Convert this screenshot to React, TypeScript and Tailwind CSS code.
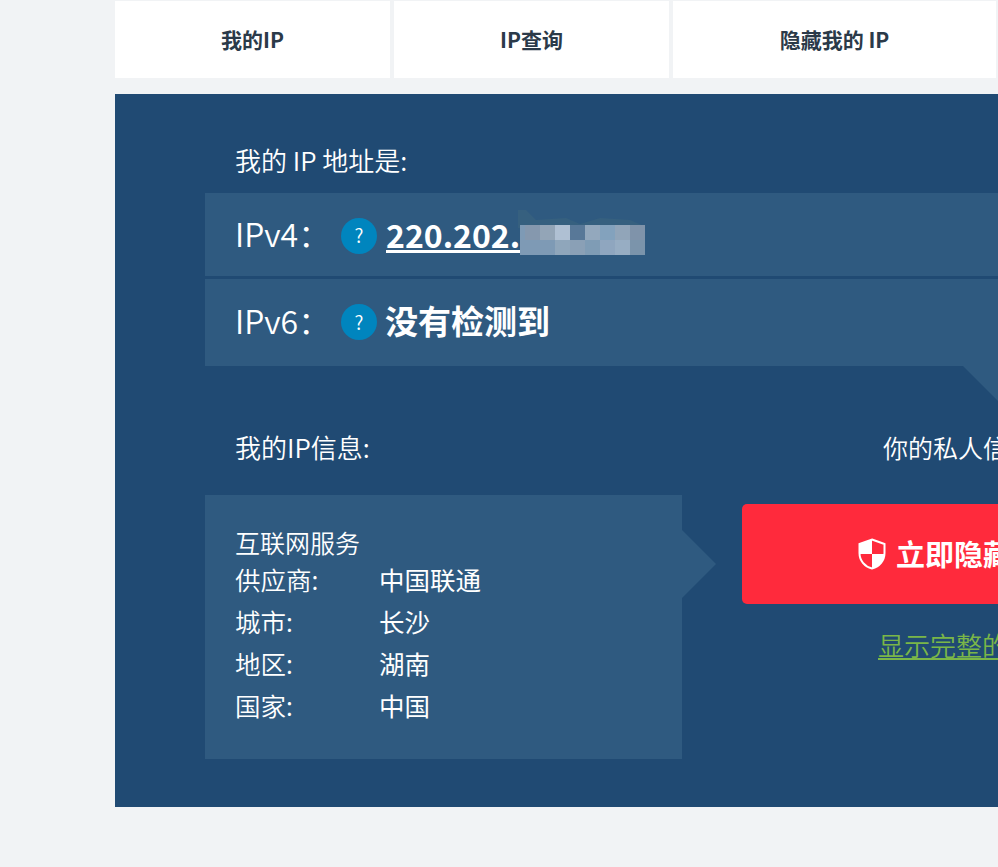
const tabs = [
  { label: '我的IP', width: 'w-[275px]' },
  { label: 'IP查询', width: 'w-[275px]' },
  { label: '隐藏我的 IP', width: 'w-[323px]' },
];

const infoRows = [
  { label: '城市:', value: '长沙' },
  { label: '地区:', value: '湖南' },
  { label: '国家:', value: '中国' },
];

const mosaicTop = ['#8598ae', '#93a5b7', '#afc0d3', '#587898', '#93a8bd', '#83a2bd', '#91a5b9', '#7f93aa'];
const mosaicBottom = ['#7e9ab5', '#7e9ab5', '#8fa6bb', '#8aa0b6', '#7f9cb5', '#8fa6bf', '#97adc3', '#7b94ab'];

function HelpDot({ className }: { className: string }) {
  return (
    <span className={`flex size-9 shrink-0 items-center justify-center rounded-full bg-[#0085be] text-[19px] font-[350] text-white ${className}`}>
      ?
    </span>
  );
}

function Mosaic() {
  return (
    <svg className="absolute left-[313px] top-[17px]" width="128" height="46" viewBox="0 0 128 46">
      <path d="M0 0h8l10 10 30-2 14 6 20-6 30 2 14 6v2H0z" fill="#36607f" />
      {mosaicTop.map((color, i) => (
        <rect key={i} x={i * 15 + 7} y="15" width="15" height="15" fill={color} />
      ))}
      {mosaicBottom.map((color, i) => (
        <rect key={i} x={i * 15 + 7} y="30" width="15" height="15" fill={color} />
      ))}
      <rect x="2" y="15" width="5" height="30" fill="#7e9ab5" />
    </svg>
  );
}

function ShieldIcon() {
  return (
    <svg width="28" height="32" viewBox="0 0 28 32" className="shrink-0">
      <path d="M14 1.500 26.500 6v9c0 7.500-5 13.500-12.500 15.500C6.500 28.500 1.500 22.500 1.500 15V6z" fill="none" stroke="#fff" strokeWidth="2" />
      <path d="M14 1.500 1.500 6v10H14z" fill="#fff" />
      <path d="M14 16h12.500c-.5 7-5.500 12.800-12.500 14.500z" fill="#fff" />
    </svg>
  );
}

export default function App() {
  return (
    <div
      className="h-[867px] w-[998px] overflow-hidden bg-[#f1f3f5] pl-[115px] pt-[1px]"
      style={{ fontFamily: '"Noto Sans CJK SC", "Noto Sans", sans-serif' }}
    >
      <nav className="flex w-[1000px] gap-1">
        {tabs.map((tab) => (
          <a
            key={tab.label}
            className={`flex h-[77px] shrink-0 items-center justify-center bg-white text-[21px] font-semibold text-[#2b3a49] ${tab.width}`}
          >
            {tab.label}
          </a>
        ))}
      </nav>

      <main className="mt-4 h-[713px] w-[1000px] bg-[#204a73] pl-[90px] pt-[48px] text-white">
        <h2 className="h-[51px] pl-[30px] text-[26px] font-[350] leading-[36px]">我的 IP 地址是:</h2>

        <div className="relative flex h-[83px] items-center bg-[#2f5a80] pl-[30px]">
          <span className="mb-[4px] w-[106px] text-[32px] font-[350]">IPv4：</span>
          <HelpDot className="mt-[2px]" />
          <a className="mb-[2px] ml-[9px] text-[32px] font-bold underline">220.202.</a>
          <Mosaic />
        </div>
        <div className="relative mt-[3px] flex h-[87px] items-center bg-[#2f5a80] pl-[30px]">
          <span className="mb-[5px] w-[106px] text-[32px] font-[350]">IPv6：</span>
          <HelpDot className="mb-[1px]" />
          <span className="mb-[4px] ml-[8px] text-[33px] font-bold">没有检测到</span>
          <span className="absolute left-[758px] top-full size-0 border-l-[36px] border-t-[36px] border-l-transparent border-t-[#2f5a80]" />
        </div>

        <div className="mt-[60px] flex">
          <section className="w-[477px] shrink-0">
            <h2 className="h-[69px] pl-[30px] text-[26px] font-[350] leading-[42px]">我的IP信息:</h2>
            <div className="relative h-[264px] bg-[#2f5a80] pl-[30px] pt-[32px] text-[25.500px]">
              <span className="absolute left-full top-[35px] size-0 border-y-[34px] border-l-[34px] border-y-transparent border-l-[#2f5a80]" />
              <div className="text-[25px] font-[350] leading-[31px]">互联网服务</div>
              <div className="flex h-[42px] items-center">
                <span className="w-[144px] font-[350]">供应商:</span>
                <span>中国联通</span>
              </div>
              {infoRows.map((row) => (
                <div key={row.label} className="flex h-[42px] items-center">
                  <span className="w-[144px] font-[350]">{row.label}</span>
                  <span>{row.value}</span>
                </div>
              ))}
            </div>
          </section>

          <section className="ml-[60px] w-[420px] shrink-0">
            <h2 className="h-[78px] pl-[141px] text-[25px] font-[350] leading-[42px]">你的私人信息已暴露</h2>
            <a className="flex h-[100px] items-center gap-[10px] rounded-[5px] bg-[#ff2a3c] pl-[116px] text-[29px] font-bold">
              <ShieldIcon />
              立即隐藏我的 IP
            </a>
            <div className="mt-[21px] pl-[136px]">
              <a className="text-[26px] font-[350] text-[#7ab648] underline">显示完整的IP信息</a>
            </div>
          </section>
        </div>
      </main>
    </div>
  );
}
